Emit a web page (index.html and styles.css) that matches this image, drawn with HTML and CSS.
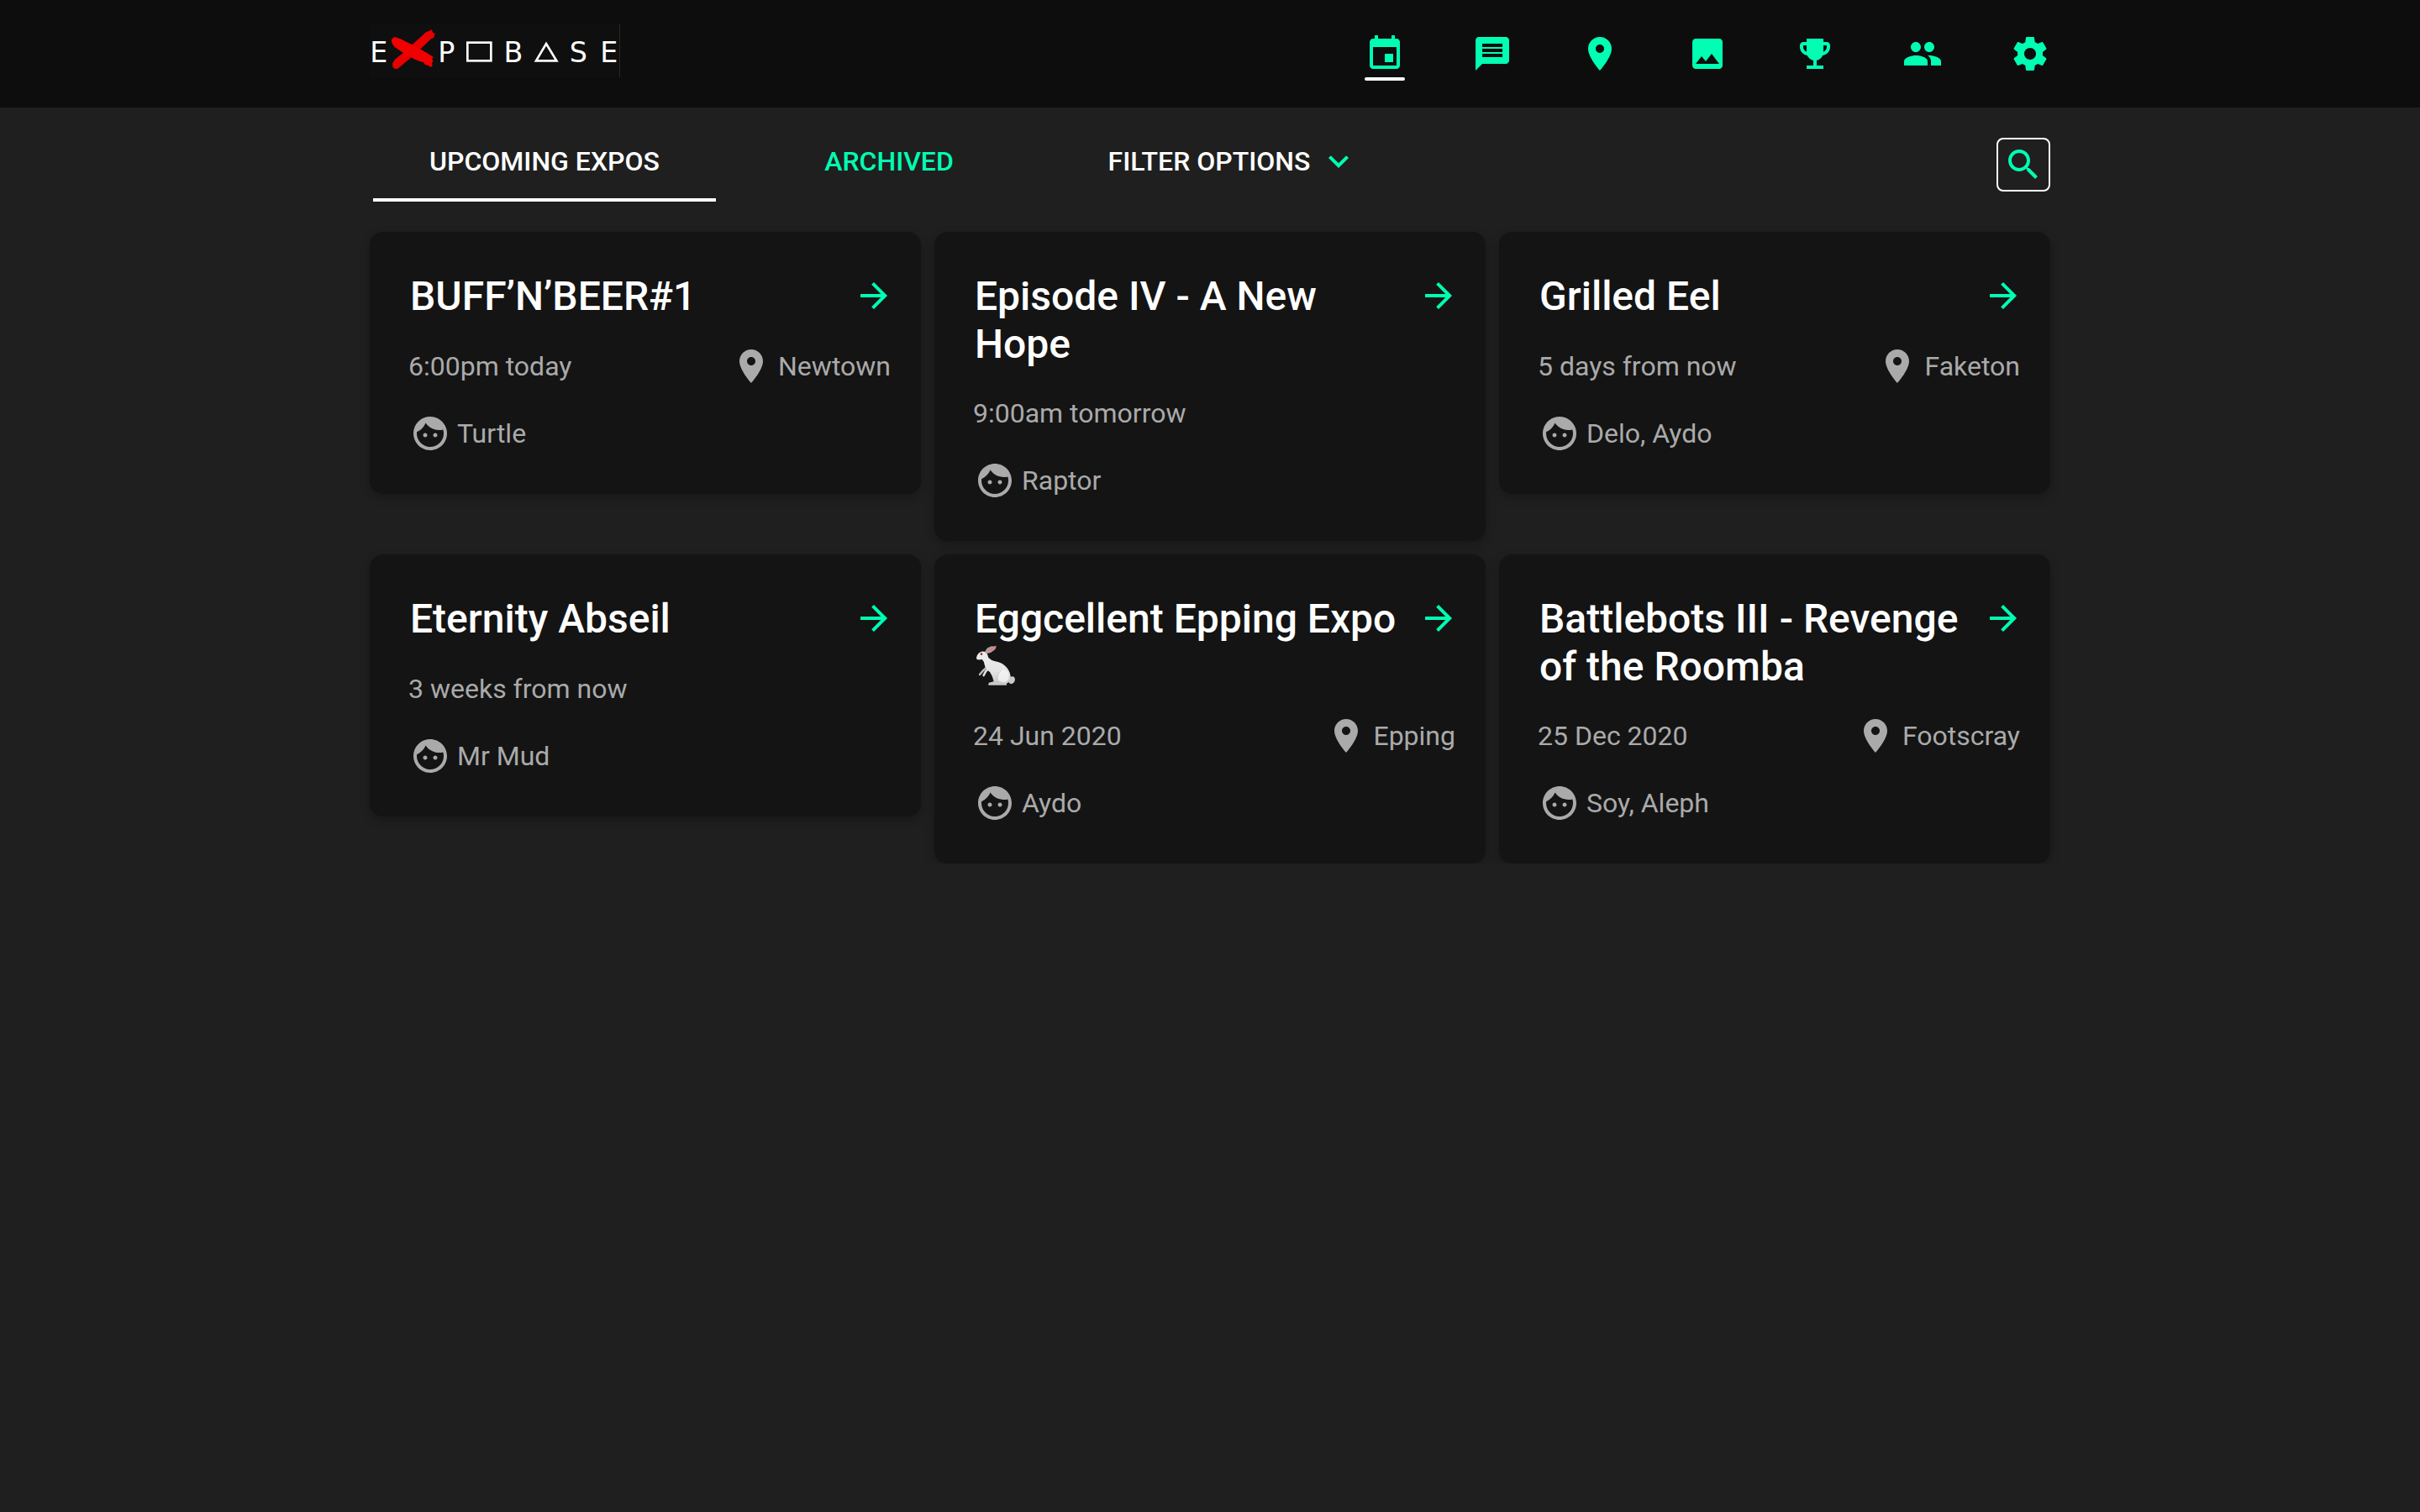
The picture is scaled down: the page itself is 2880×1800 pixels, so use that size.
FILE: index.html
```html
<!DOCTYPE html>
<html lang="en">
<head>
<meta charset="utf-8">
<meta name="viewport" content="width=device-width, initial-scale=1">
<title>Expobase</title>
<link rel="stylesheet" href="styles.css">
</head>
<body>
<svg class="sprite" aria-hidden="true">
  <symbol id="i-event" viewBox="0 0 24 24"><path d="M17 12h-5v5h5v-5zM16 1v2H8V1H6v2H5c-1.11 0-1.99.9-1.99 2L3 19c0 1.1.89 2 2 2h14c1.1 0 2-.9 2-2V5c0-1.1-.9-2-2-2h-1V1h-2zm3 18H5V8h14v11z"/></symbol>
  <symbol id="i-chat" viewBox="0 0 24 24"><path d="M20 2H4c-1.1 0-1.99.9-1.99 2L2 22l4-4h14c1.1 0 2-.9 2-2V4c0-1.1-.9-2-2-2zm-2 12H6v-2h12v2zm0-3H6V9h12v2zm0-3H6V6h12v2z"/></symbol>
  <symbol id="i-place" viewBox="0 0 24 24"><path d="M12 2C8.13 2 5 5.13 5 9c0 5.25 7 13 7 13s7-7.75 7-13c0-3.87-3.13-7-7-7zm0 9.5c-1.38 0-2.5-1.12-2.5-2.5s1.12-2.5 2.5-2.5 2.5 1.12 2.5 2.5-1.12 2.5-2.5 2.5z"/></symbol>
  <symbol id="i-image" viewBox="0 0 24 24"><path d="M21 19V5c0-1.1-.9-2-2-2H5c-1.1 0-2 .9-2 2v14c0 1.1.9 2 2 2h14c1.1 0 2-.9 2-2zM8.5 13.5l2.5 3.01L14.5 12l4.5 6H5l3.5-4.5z"/></symbol>
  <symbol id="i-trophy" viewBox="0 0 24 24"><path d="M19 5h-2V3H7v2H5c-1.1 0-2 .9-2 2v1c0 2.55 1.92 4.63 4.39 4.94.63 1.5 1.98 2.63 3.61 2.96V19H7v2h10v-2h-4v-3.1c1.63-.33 2.98-1.46 3.61-2.96C19.08 12.63 21 10.55 21 8V7c0-1.1-.9-2-2-2zM5 8V7h2v3.82C5.84 10.4 5 9.3 5 8zm14 0c0 1.3-.84 2.4-2 2.82V7h2v1z"/></symbol>
  <symbol id="i-people" viewBox="0 0 24 24"><path d="M16 11c1.66 0 2.99-1.34 2.99-3S17.66 5 16 5c-1.66 0-3 1.34-3 3s1.34 3 3 3zm-8 0c1.66 0 2.99-1.34 2.99-3S9.66 5 8 5C6.34 5 5 6.34 5 8s1.34 3 3 3zm0 2c-2.33 0-7 1.17-7 3.5V19h14v-2.5c0-2.33-4.67-3.5-7-3.5zm8 0c-.29 0-.62.02-.97.05 1.16.84 1.97 1.97 1.97 3.45V19h6v-2.5c0-2.33-4.67-3.5-7-3.5z"/></symbol>
  <symbol id="i-settings" viewBox="0 0 24 24"><path d="M19.43 12.98c.04-.32.07-.64.07-.98s-.03-.66-.07-.98l2.11-1.65c.19-.15.24-.42.12-.64l-2-3.46c-.12-.22-.39-.3-.61-.22l-2.49 1c-.52-.4-1.08-.73-1.69-.98l-.38-2.65C14.46 2.18 14.25 2 14 2h-4c-.25 0-.46.18-.49.42l-.38 2.65c-.61.25-1.17.59-1.69.98l-2.49-1c-.23-.09-.49 0-.61.22l-2 3.46c-.13.22-.07.49.12.64l2.11 1.65c-.04.32-.07.65-.07.98s.03.66.07.98l-2.11 1.65c-.19.15-.24.42-.12.64l2 3.46c.12.22.39.3.61.22l2.49-1c.52.4 1.08.73 1.69.98l.38 2.65c.03.24.24.42.49.42h4c.25 0 .46-.18.49-.42l.38-2.65c.61-.25 1.17-.59 1.69-.98l2.49 1c.23.09.49 0 .61-.22l2-3.46c.12-.22.07-.49-.12-.64l-2.11-1.65zM12 15.5c-1.93 0-3.5-1.57-3.5-3.5s1.57-3.5 3.5-3.5 3.5 1.57 3.5 3.5-1.57 3.5-3.5 3.5z"/></symbol>
  <symbol id="i-more" viewBox="0 0 24 24"><path d="M7.41 8.59L12 13.17l4.59-4.58L18 10l-6 6-6-6 1.41-1.41z"/></symbol>
  <symbol id="i-search" viewBox="0 0 24 24"><path d="M15.5 14h-.79l-.28-.27C15.41 12.59 16 11.11 16 9.5 16 5.91 13.09 3 9.5 3S3 5.91 3 9.5 5.91 16 9.5 16c1.61 0 3.09-.59 4.23-1.57l.27.28v.79l5 4.99L20.49 19l-4.99-5zm-6 0C7.01 14 5 11.99 5 9.5S7.01 5 9.5 5 14 7.01 14 9.5 11.99 14 9.5 14z"/></symbol>
  <symbol id="i-arrow" viewBox="0 0 24 24"><path d="M12 4l-1.41 1.41L16.17 11H4v2h12.17l-5.58 5.59L12 20l8-8z"/></symbol>
  <symbol id="i-face" viewBox="0 0 24 24"><path d="M9 11.75c-.69 0-1.25.56-1.25 1.25s.56 1.25 1.25 1.25 1.25-.56 1.25-1.25-.56-1.25-1.25-1.25zm6 0c-.69 0-1.25.56-1.25 1.25s.56 1.25 1.25 1.25 1.25-.56 1.25-1.25-.56-1.25-1.25-1.25zM12 2C6.48 2 2 6.48 2 12s4.48 10 10 10 10-4.48 10-10S17.52 2 12 2zm0 18c-4.41 0-8-3.59-8-8 0-.29.02-.58.05-.86 2.36-1.05 4.23-2.98 5.21-5.37C11.07 8.33 14.05 10 17.42 10c.78 0 1.53-.09 2.25-.26.21.71.33 1.47.33 2.26 0 4.41-3.59 8-8 8z"/></symbol>
</svg>

<header class="topbar">
  <div class="container topbar-inner">
    <a class="logo" href="#" aria-label="Expobase home">
      <svg class="logo-art" viewBox="60 54 894 192">
        <rect class="logo-edge" x="951" y="54" width="3" height="192"/>
        <g class="logo-letters">
          <text x="92" y="191">E</text>
          <text x="334" y="191">P</text>
          <text x="573" y="191">B</text>
          <text x="805" y="191">S</text>
          <text x="914" y="191">E</text>
        </g>
        <g class="logo-shapes">
          <rect x="409" y="122" width="84" height="65"/>
          <path d="M690 126L727 187H654z"/>
        </g>
        <path class="logo-x" d="M282 76l3 10 8 4-5 16-8 2-70 66-50 41q-12 4-18-6l-1-12 8-14 42-34 32-30 38-34z"/>
        <path class="logo-x-front" d="M150 102l20 7 40 20 34 18 43 26-4 8 3 8-4 6 2 10-6 5-10-7-10-2-6-8-14-4-20-8-44-26-26-18q-12-14-10-26 4-8 12-9z"/>
      </svg>
    </a>
    <nav class="nav" aria-label="Main">
      <a class="nav-link is-active" href="#" aria-label="Expos"><svg class="icon"><use href="#i-event"/></svg></a>
      <a class="nav-link" href="#" aria-label="Messages"><svg class="icon"><use href="#i-chat"/></svg></a>
      <a class="nav-link" href="#" aria-label="Locations"><svg class="icon"><use href="#i-place"/></svg></a>
      <a class="nav-link" href="#" aria-label="Gallery"><svg class="icon"><use href="#i-image"/></svg></a>
      <a class="nav-link" href="#" aria-label="Trophies"><svg class="icon"><use href="#i-trophy"/></svg></a>
      <a class="nav-link" href="#" aria-label="People"><svg class="icon"><use href="#i-people"/></svg></a>
      <a class="nav-link" href="#" aria-label="Settings"><svg class="icon"><use href="#i-settings"/></svg></a>
    </nav>
  </div>
</header>

<main class="container">
  <div class="toolbar">
    <div class="tabs">
      <button class="tab is-active" type="button">UPCOMING EXPOS</button>
      <button class="tab tab-alt" type="button">ARCHIVED</button>
      <button class="tab" type="button">FILTER OPTIONS <svg class="icon accent" aria-hidden="true"><use href="#i-more"/></svg></button>
    </div>
    <button class="search" type="button" aria-label="Search"><svg class="icon"><use href="#i-search"/></svg></button>
  </div>

  <section class="cards" aria-label="Upcoming expos">
    <article class="card">
      <div class="card-head"><h2 class="card-title">BUFF’N’BEER#1</h2><a class="open" href="#" aria-label="Open expo"><svg class="icon"><use href="#i-arrow"/></svg></a></div>
      <div class="when-where"><span>6:00pm today</span><span class="tagged"><svg class="icon"><use href="#i-place"/></svg>Newtown</span></div>
      <div class="tagged host"><svg class="icon"><use href="#i-face"/></svg>Turtle</div>
    </article>
    <article class="card">
      <div class="card-head"><h2 class="card-title">Episode IV - A New Hope</h2><a class="open" href="#" aria-label="Open expo"><svg class="icon"><use href="#i-arrow"/></svg></a></div>
      <div class="when-where"><span>9:00am tomorrow</span></div>
      <div class="tagged host"><svg class="icon"><use href="#i-face"/></svg>Raptor</div>
    </article>
    <article class="card">
      <div class="card-head"><h2 class="card-title">Grilled Eel</h2><a class="open" href="#" aria-label="Open expo"><svg class="icon"><use href="#i-arrow"/></svg></a></div>
      <div class="when-where"><span>5 days from now</span><span class="tagged"><svg class="icon"><use href="#i-place"/></svg>Faketon</span></div>
      <div class="tagged host"><svg class="icon"><use href="#i-face"/></svg>Delo, Aydo</div>
    </article>
    <article class="card">
      <div class="card-head"><h2 class="card-title">Eternity Abseil</h2><a class="open" href="#" aria-label="Open expo"><svg class="icon"><use href="#i-arrow"/></svg></a></div>
      <div class="when-where"><span>3 weeks from now</span></div>
      <div class="tagged host"><svg class="icon"><use href="#i-face"/></svg>Mr Mud</div>
    </article>
    <article class="card">
      <div class="card-head"><h2 class="card-title">Eggcellent Epping Expo
        <svg class="rabbit" viewBox="30 24 144 144" role="img" aria-label="rabbit">
          <defs>
            <linearGradient id="fur" x1="0" y1="0" x2="0" y2="1"><stop offset="0" stop-color="#ececec"/><stop offset=".6" stop-color="#e4e4e4"/><stop offset="1" stop-color="#c4c4c4"/></linearGradient>
          </defs>
          <path fill="#9c9c9c" d="M66 48q6-18 30-21l-8 12-16 12z"/>
          <ellipse cx="162" cy="149" rx="11" ry="14" transform="rotate(28 162 149)" fill="#c9c9c9"/>
          <path fill="none" stroke="#bdbdbd" stroke-width="7" stroke-linecap="round" d="M72 104l-13 12-11 13"/>
          <path fill="none" stroke="#dedede" stroke-width="8" stroke-linecap="round" d="M82 106l-13 12-7 14"/>
          <path fill="url(#fur)" d="M36 68q4-16 18-21 12-3 19 6 5 8 6 16 10 10 24 13 26 4 42 23 16 20 12 38-3 14-14 19l2 5H80q-4-5 3-9l15-4q-4-20-14-34-16-10-19-26-2-13-9-19-14 3-19-1z"/>
          <path fill="#f4f4f4" d="M112 148q-4-22 12-33 16-8 25 8 8 18-6 32-16 6-31-7z" opacity=".8"/>
          <path fill="none" stroke="#bbb" stroke-width="2" d="M112 150q-4-24 12-35M80 160q10-5 34-3"/>
          <path fill="#b4a5a3" d="M68 52q8-20 39-26 0 20-33 28z"/>
          <path fill="#dc7f7c" d="M74 48q10-15 31-18-2 14-31 18z"/>
          <circle cx="54" cy="56" r="4" fill="#a92c32"/>
        </svg></h2><a class="open" href="#" aria-label="Open expo"><svg class="icon"><use href="#i-arrow"/></svg></a></div>
      <div class="when-where"><span>24 Jun 2020</span><span class="tagged"><svg class="icon"><use href="#i-place"/></svg>Epping</span></div>
      <div class="tagged host"><svg class="icon"><use href="#i-face"/></svg>Aydo</div>
    </article>
    <article class="card">
      <div class="card-head"><h2 class="card-title">Battlebots III - Revenge of the Roomba</h2><a class="open" href="#" aria-label="Open expo"><svg class="icon"><use href="#i-arrow"/></svg></a></div>
      <div class="when-where"><span>25 Dec 2020</span><span class="tagged"><svg class="icon"><use href="#i-place"/></svg>Footscray</span></div>
      <div class="tagged host"><svg class="icon"><use href="#i-face"/></svg>Soy, Aleph</div>
    </article>
  </section>
</main>
</body>
</html>
```
FILE: styles.css
```css
:root {
  --accent: #00ffb3;
  --muted: #aaa;
}

* {
  box-sizing: border-box;
}

body {
  margin: 0;
  background: #1f1f1f;
  color: #fff;
  font-family: Roboto, "Liberation Sans", sans-serif;
  font-size: 32px;
  line-height: 48px;
}

button {
  padding: 0;
  border: 0;
  background: none;
  color: inherit;
  font: inherit;
  cursor: pointer;
}

.sprite {
  display: none;
}

.icon {
  display: block;
  flex: none;
  width: 48px;
  height: 48px;
  fill: currentColor;
}

.accent {
  color: var(--accent);
}

.container {
  width: 100%;
  max-width: 2000px;
  margin: 0 auto;
}

/* Top bar */
.topbar {
  background: #0d0d0d;
}

.topbar-inner {
  display: flex;
  justify-content: space-between;
  align-items: flex-start;
  padding: 28px 0 36px;
}

.logo-art {
  display: block;
  width: 298px;
  height: 64px;
  background: #0f0f0f;
}

.logo-edge {
  fill: #262626;
}

.logo-letters {
  fill: #fff;
  font-family: "DejaVu Sans", sans-serif;
  font-size: 100px;
  text-anchor: middle;
}

.logo-shapes {
  fill: none;
  stroke: #fff;
  stroke-width: 8;
}

.logo-x {
  fill: #e60000;
}

.logo-x-front {
  fill: #f00000;
}

.nav {
  display: flex;
  gap: 80px;
  padding-top: 12px;
}

.nav-link {
  position: relative;
  color: var(--accent);
}

.nav-link.is-active::after {
  content: "";
  position: absolute;
  top: 52px;
  left: 0;
  right: 0;
  height: 4px;
  border-radius: 2px;
  background: #fff;
}

/* Tabs and search */
.toolbar {
  display: flex;
  justify-content: space-between;
  align-items: flex-start;
  padding: 16px 0 36px 4px;
}

.tabs {
  display: grid;
  grid-template-columns: repeat(3, 408px);
  column-gap: 2px;
}

.tab {
  display: flex;
  justify-content: center;
  gap: 10px;
  padding: 24px 0 20px;
  border-bottom: 4px solid transparent;
  font-weight: 500;
}

.tab.is-active {
  border-bottom-color: #fff;
}

.tab-alt {
  color: var(--accent);
}

.search {
  margin-top: 20px;
  padding: 6px;
  border: 2px solid #fff;
  border-radius: 8px;
  color: var(--accent);
}

/* Expo cards */
.cards {
  display: grid;
  grid-template-columns: repeat(3, 1fr);
  align-items: start;
  gap: 16px;
}

.card {
  padding: 48px 32px 48px 46px;
  border-radius: 16px;
  background: #141414;
  box-shadow: 0 4px 12px rgba(0, 0, 0, 0.25);
  color: var(--muted);
}

.card-head {
  display: flex;
  justify-content: space-between;
  align-items: flex-start;
  gap: 16px;
  min-height: 58px;
  padding-left: 2px;
}

.card-title {
  margin: 0;
  color: #fff;
  font-size: 48px;
  font-weight: 500;
  line-height: 57px;
}

.rabbit {
  width: 48px;
  height: 48px;
  vertical-align: -6px;
}

.open {
  padding-top: 4px;
  color: var(--accent);
}

.when-where {
  display: flex;
  justify-content: space-between;
  margin-top: 30px;
  padding-right: 4px;
}

.tagged {
  display: flex;
  gap: 8px;
}

.host {
  margin-top: 32px;
  padding-left: 2px;
}
```
